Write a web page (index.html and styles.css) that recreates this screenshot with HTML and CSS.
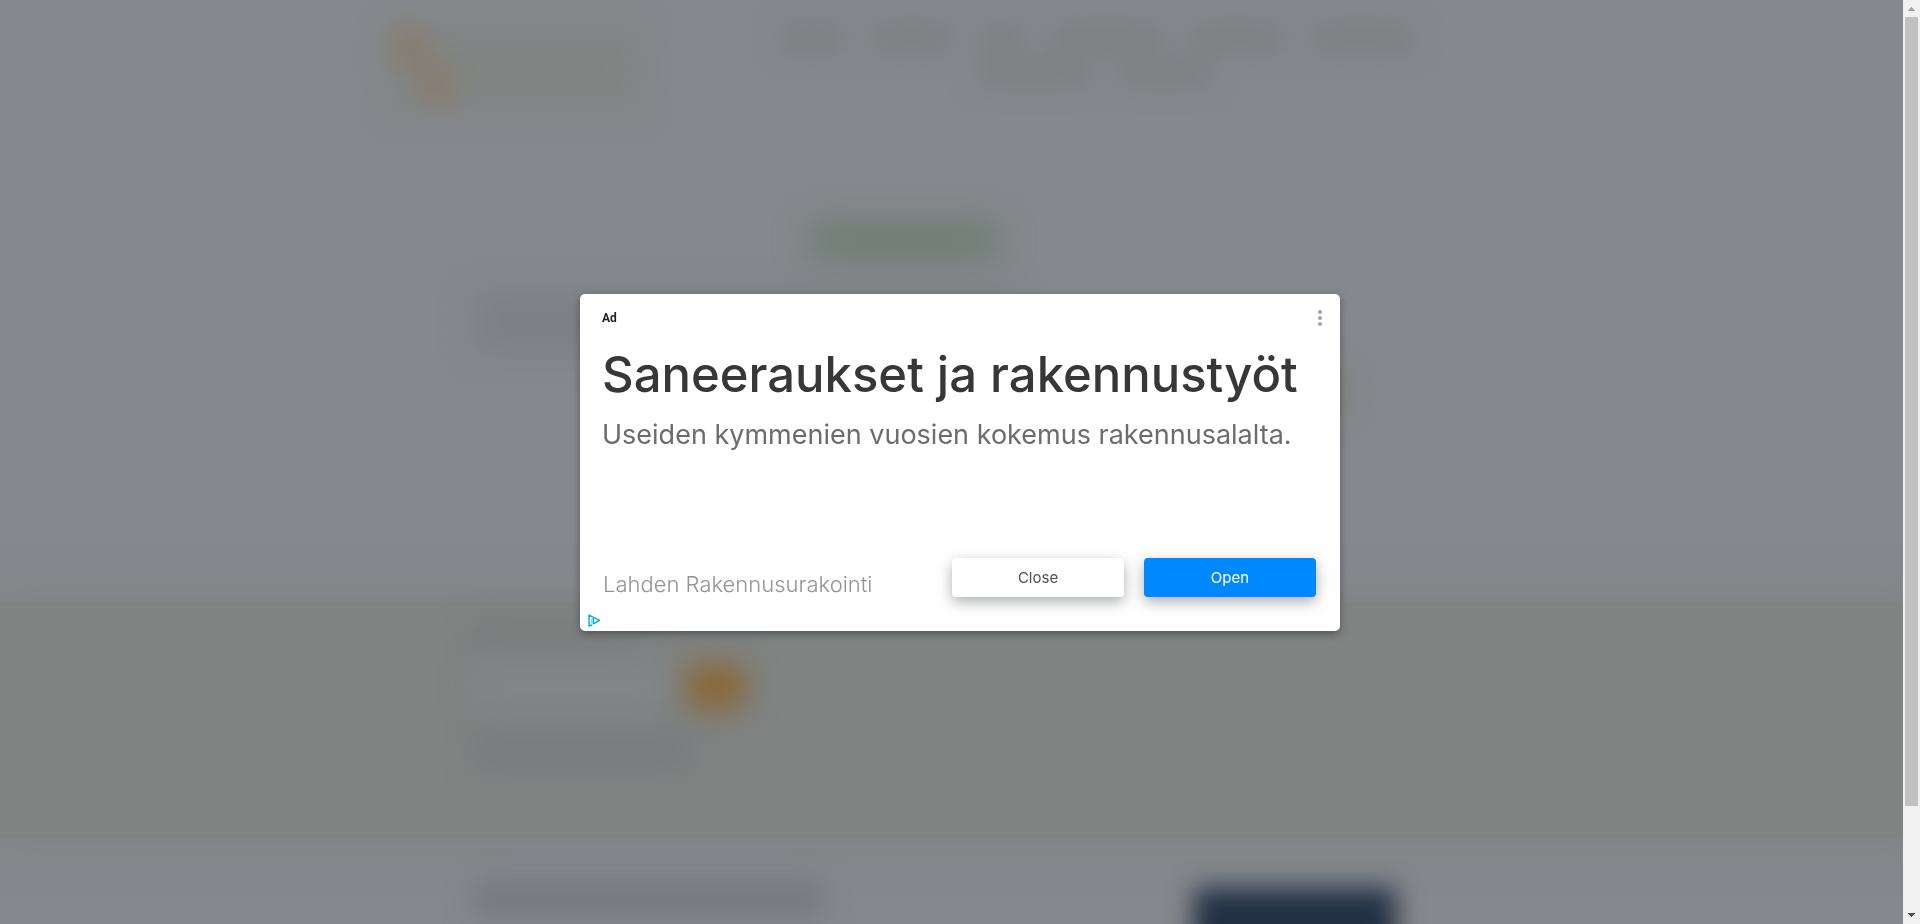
FILE: index.html
```html
<!DOCTYPE html>
<html lang="fi">
<head>
<meta charset="utf-8">
<meta name="viewport" content="width=device-width, initial-scale=1">
<title>Lahden Rakennusurakointi</title>
<link rel="stylesheet" href="styles.css">
</head>
<body>
<div class="page" aria-hidden="true">
  <header class="site-header">
    <div class="logo"><i class="logo-mark"></i><i class="logo-mark logo-mark-low"></i></div>
    <div class="nav">
      <div class="nav-row"><i class="w60"></i><i class="w80"></i><i class="w40"></i><i class="w110"></i><i class="w90"></i><i class="w100"></i></div>
      <div class="nav-row nav-row-second"><i class="w110"></i><i class="w90"></i></div>
    </div>
  </header>
  <section class="intro">
    <i class="headline"></i>
    <i class="paragraph"></i>
    <i class="intro-action"></i>
  </section>
  <section class="band">
    <i class="label"></i>
    <div class="search"><i class="field"></i><i class="submit"></i></div>
    <i class="note"></i>
  </section>
  <section class="articles"><i class="article-title"></i><i class="article-image"></i></section>
</div>

<div class="overlay">
  <main class="ad" role="dialog" aria-labelledby="ad-title">
    <div class="ad-top">
      <span class="ad-tag">Ad</span>
      <button class="menu" type="button" aria-label="Menu">
        <svg width="4" height="16" viewBox="0 0 4 16" fill="#a2a4a7"><circle cx="2" cy="2" r="2"/><circle cx="2" cy="8" r="2"/><circle cx="2" cy="14" r="2"/></svg>
      </button>
    </div>
    <h1 class="title" id="ad-title">Saneeraukset ja rakennustyöt</h1>
    <p class="description">Useiden kymmenien vuosien kokemus rakennusalalta.</p>
    <div class="ad-bottom">
      <span class="advertiser">Lahden Rakennusurakointi</span>
      <button class="button" type="button">Close</button>
      <button class="button button-primary" type="button">Open</button>
    </div>
    <a class="choices" href="#" aria-label="AdChoices">
      <svg width="13" height="13" viewBox="0 0 13 13" fill="none" stroke="#00aecd"><path d="M4.2 10.8 1 12V1l10.5 5.4L5.3 9.8V4" stroke-width="1.4" stroke-linejoin="round"/><path d="M3.5 4.4v5.4" stroke="#8bd9e7"/></svg>
    </a>
  </main>
</div>

<div class="scrollbar" aria-hidden="true">
  <svg class="arrow" viewBox="0 0 17 17" fill="#a3a3a3" shape-rendering="crispEdges"><path d="M8 7h1v1h1v1h1v1h1v1H5v-1h1V9h1V8h1z"/></svg>
  <div class="track"><div class="thumb"></div></div>
  <svg class="arrow" viewBox="0 0 17 17" fill="#505050" shape-rendering="crispEdges"><path d="M5 6h7v1h-1v1h-1v1H9v1H8V9H7V8H6V7H5z"/></svg>
</div>
</body>
</html>
```
FILE: styles.css
```css
* { box-sizing: border-box; }
body {
  margin: 0;
  height: 100vh;
  overflow: hidden;
  background: #85888c;
  font-family: Inter, "Liberation Sans", sans-serif;
}

/* Dimmed page behind the dialog */
.page {
  height: 100%;
  overflow: hidden;
  display: flex;
  flex-direction: column;
}
.page i { display: block; }
.site-header {
  height: 224px;
  flex: none;
  display: flex;
  gap: 140px;
  padding: 26px 0 0 390px;
}
.logo {
  width: 252px;
  height: 84px;
  padding: 2px 2px;
  display: flex;
  background: #818584;
  filter: blur(15px);
}
.logo-mark { width: 34px; height: 38px; background: #897a69; }
.logo-mark-low { margin: 38px 0 0 -6px; }
.nav { filter: blur(14px); }
.nav-row { display: flex; gap: 30px; margin-bottom: 10px; }
.nav-row-second { padding-left: 198px; }
.nav-row i { height: 24px; background: #7b7e81; }
.w40 { width: 40px; }
.w60 { width: 60px; }
.w80 { width: 80px; }
.w90 { width: 90px; }
.w100 { width: 100px; }
.w110 { width: 110px; }
.intro {
  height: 378px;
  flex: none;
  padding: 0 540px 0 474px;
}
.headline {
  width: 188px;
  height: 32px;
  margin-left: 336px;
  background: #6b7c70;
  filter: blur(16px);
}
.paragraph {
  width: 540px;
  height: 60px;
  margin-top: 36px;
  background: #7d8084;
  filter: blur(15px);
}
.intro-action {
  width: 60px;
  height: 40px;
  margin: 20px 36px 0 auto;
  background: #807e76;
  filter: blur(14px);
}
.band {
  height: 236px;
  flex: none;
  padding: 20px 474px;
  background: #7f8382;
  box-shadow: 0 0 36px 2px #7f8382;
}
.label { width: 160px; height: 26px; background: #797d7d; filter: blur(14px); }
.search { display: flex; gap: 16px; margin-top: 16px; }
.field { width: 196px; height: 44px; background: #82868a; filter: blur(15px); }
.submit { width: 60px; height: 46px; background: #8a6838; filter: blur(15px); }
.note { width: 216px; height: 34px; margin-top: 24px; background: #777b7d; filter: blur(14px); }
.articles {
  flex: 1;
  display: flex;
  gap: 370px;
  padding: 44px 0 0 474px;
}
.article-title { width: 350px; height: 34px; background: #75787d; filter: blur(14px); }
.article-image { width: 202px; height: 240px; flex: none; margin-top: 6px; background: #223044; filter: blur(13px); }

/* Dialog */
.overlay {
  position: fixed;
  inset: 0;
  display: flex;
  align-items: center;
  justify-content: center;
}
.ad {
  width: 760px;
  max-width: 96vw;
  padding: 16px 24px 4px 22px;
  background: #fff;
  border-radius: 5px;
  box-shadow: 0 3px 9px rgba(0, 0, 0, .35);
}
.ad-top {
  display: flex;
  align-items: center;
  justify-content: space-between;
  height: 16px;
}
.ad-tag { font: 700 12px/16px Roboto, sans-serif; color: #202124; }
.menu {
  display: flex;
  padding: 0 4px;
  margin-right: -10px;
  border: 0;
  background: none;
}
.title {
  margin: 17px 0 0;
  font-size: 49px;
  line-height: 64px;
  font-weight: 500;
  color: #373737;
  white-space: nowrap;
}
.description {
  margin: 8px 0 0;
  font-size: 27px;
  line-height: 40px;
  font-weight: 400;
  color: #6c6c6c;
  white-space: nowrap;
}
.ad-bottom {
  display: flex;
  gap: 20px;
  margin-top: 103px;
}
.advertiser {
  flex: 1;
  padding: 10px 0 0 1px;
  font-size: 22px;
  line-height: 32px;
  font-weight: 300;
  color: #949494;
  white-space: nowrap;
}
.button {
  width: 172px;
  height: 39px;
  border: 0;
  border-radius: 4px;
  background: #fff;
  box-shadow: 0 5px 14px rgba(60, 64, 80, .42);
  color: #505050;
  font-family: inherit;
  font-size: 15px;
}
.button-primary { background: #0088ff; color: #fff; }
.choices { display: block; width: 13px; height: 13px; margin: 14px 0 0 -14px; }
.choices svg { display: block; }

/* Scrollbar */
.scrollbar {
  position: fixed;
  inset: 0 0 0 auto;
  width: 17px;
  display: flex;
  flex-direction: column;
  background: #f1f1f1;
}
.arrow { width: 17px; height: 17px; flex: none; }
.track { flex: 1; padding: 0 2px; }
.thumb { height: 88.7%; background: #c1c1c1; }
```
